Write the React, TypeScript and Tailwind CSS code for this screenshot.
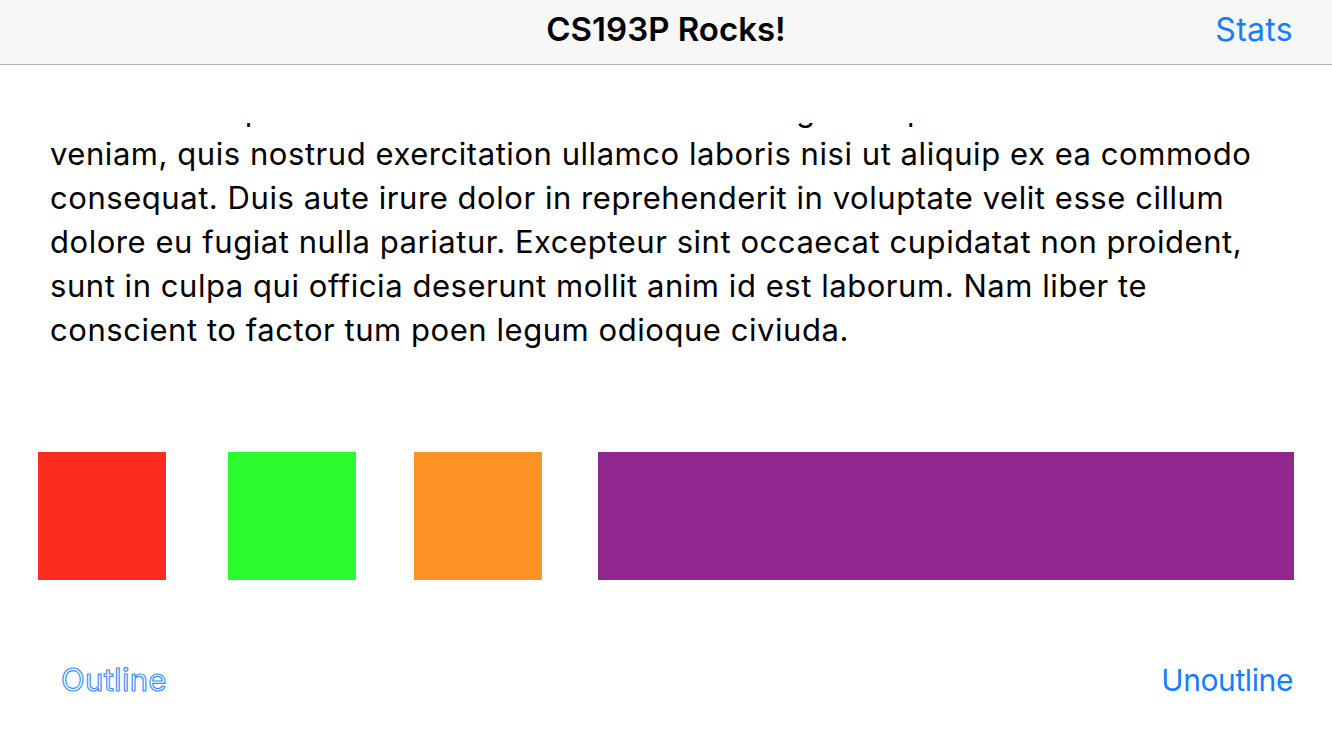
import React from "react";

const lines = [
  "Lorem ipsum dolor sit amet, consectetur adipiscing elit, sed do",
  "eiusmod tempor incididunt ut labore et dolore magna aliqua. Ut enim ad minim",
  "veniam, quis nostrud exercitation ullamco laboris nisi ut aliquip ex ea commodo",
  "consequat. Duis aute irure dolor in reprehenderit in voluptate velit esse cillum",
  "dolore eu fugiat nulla pariatur. Excepteur sint occaecat cupidatat non proident,",
  "sunt in culpa qui officia deserunt mollit anim id est laborum. Nam liber te",
  "conscient to factor tum poen legum odioque civiuda.",
];

export default function App() {
  return (
    <div className="w-[1332px] h-[746px] bg-white overflow-hidden font-['Inter',sans-serif] text-black">
      {/* nav bar */}
      <div className="h-16 box-content bg-[#f7f7f7] border-b border-[#b2b2b2] grid grid-cols-[1fr_auto_1fr] items-center pb-0">
        <div />
        <span className="text-[33px] font-semibold -mt-1">CS193P Rocks!</span>
        <div className="flex justify-end pr-[39px]">
          <button className="text-[32px] text-[#157efb] tracking-[0.3px] -mt-1">Stats</button>
        </div>
      </div>

      {/* scrolled text view */}
      <div className="mt-[58px] h-[240px] overflow-hidden pl-[50px]">
        <div className="-mt-[79px] text-[31px] leading-[44px] tracking-[0.55px]">
          {lines.map((l, i) => (
            <div key={i} className="whitespace-nowrap">
              {l}
            </div>
          ))}
        </div>
      </div>

      {/* colored views */}
      <div className="mt-[89px] flex pl-[38px]">
        <div className="w-[128px] h-[128px] bg-[#fd2c1f]" />
        <div className="w-[128px] h-[128px] bg-[#29fb2e] ml-[62px]" />
        <div className="w-[128px] h-[128px] bg-[#fd9327] ml-[58px]" />
        <div className="w-[696px] h-[128px] bg-[#90278e] ml-[56px]" />
      </div>

      {/* buttons */}
      <div className="mt-[78px] h-[44px] flex items-center justify-between pl-[61px] pr-[39px]">
        <button className="text-[31px] tracking-[0.3px] text-white [-webkit-text-stroke:1.2px_#3a90f8]">
          Outline
        </button>
        <button className="text-[30px] tracking-[-0.4px] text-[#157efb]">Unoutline</button>
      </div>
    </div>
  );
}
